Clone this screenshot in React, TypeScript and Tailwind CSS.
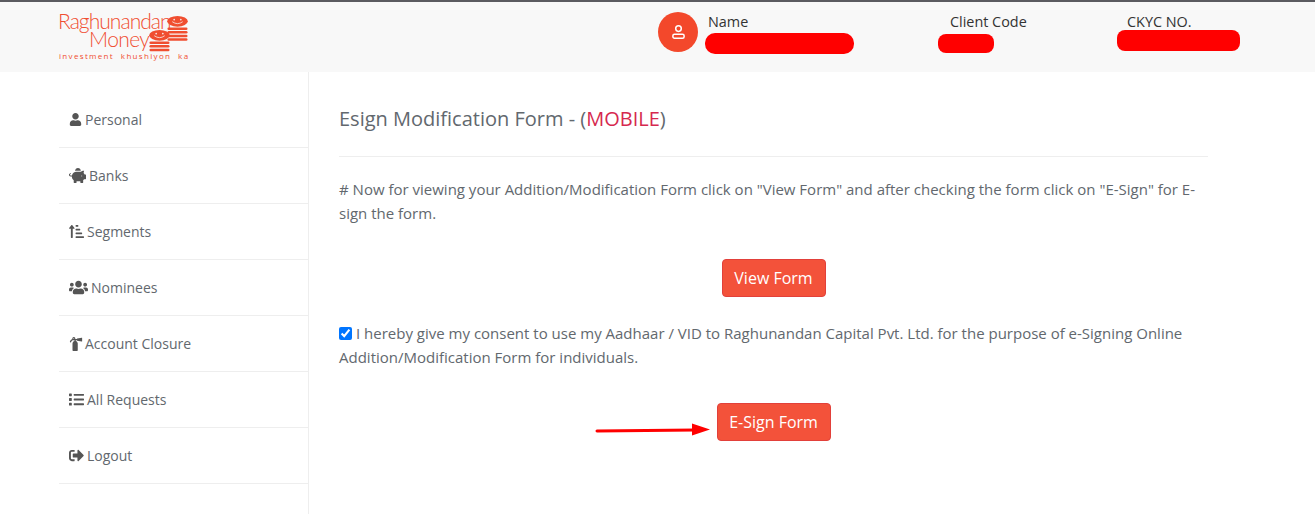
import React from "react";
import { FaUser, FaPiggyBank, FaSortAmountUpAlt, FaUsers, FaFireExtinguisher, FaList, FaSignOutAlt } from "react-icons/fa";

const items = [
  { label: "Personal", Icon: FaUser, size: 13, gap: "gap-[3px]" },
  { label: "Banks", Icon: FaPiggyBank, size: 17, gap: "gap-[3px]" },
  { label: "Segments", Icon: FaSortAmountUpAlt, size: 15, gap: "gap-[3px]" },
  { label: "Nominees", Icon: FaUsers, size: 19, gap: "gap-[3px]" },
  { label: "Account Closure", Icon: FaFireExtinguisher, size: 14, gap: "gap-[2px]" },
  { label: "All Requests", Icon: FaList, size: 15, gap: "gap-[3px]" },
  { label: "Logout", Icon: FaSignOutAlt, size: 15, gap: "gap-[3px]" },
];

function Coins({ n, className }: { n: number; className: string }) {
  const ys = Array.from({ length: n }, (_, i) => i);
  return (
    <svg viewBox={`0 0 22 ${12 + n * 3.8}`} className={className} fill="#f04e30">
      {ys.map((i) => (
        <rect key={i} x="0.5" y={12 + i * 3.8} width="21" height="2.6" rx="1.3" />
      ))}
      <ellipse cx="11" cy="5.6" rx="10.8" ry="5.6" />
      <circle cx="7.5" cy="3.8" r="0.8" fill="#f8f8f8" />
      <circle cx="14.5" cy="3.8" r="0.8" fill="#f8f8f8" />
      <path d="M5.5 6 Q11 10 16.5 6" stroke="#f8f8f8" strokeWidth="0.8" fill="none" />
    </svg>
  );
}

function Logo() {
  return (
    <div className="ml-[-1px] w-[131px] shrink-0 text-[#f04e30]">
      <div className="relative h-[36px] font-['Lato',sans-serif]">
        <div className="mt-[-1px] whitespace-nowrap text-[21px] font-light leading-[20px] tracking-[-0.95px]">Raghunandan</div>
        <div className="pl-[31px] text-[21px] font-light leading-[15px] tracking-[-0.6px]">Money</div>
        <Coins n={4} className="absolute left-[109px] top-[5px] w-[21px]" />
        <Coins n={3} className="absolute left-[91px] top-[19px] w-[21px]" />
      </div>
      <div className="ml-[1px] mt-[4px] whitespace-pre text-[8px] font-medium leading-[10px] tracking-[1.33px] font-['Open_Sans',sans-serif]">investment  khushiyon  ka</div>
    </div>
  );
}

function AvatarIcon() {
  return (
    <svg width="13" height="14" viewBox="0 0 13 14" fill="none" stroke="#fff" strokeWidth="1.5">
      <circle cx="6.5" cy="3.6" r="2.8" />
      <rect x="0.9" y="9.2" width="11.2" height="4" rx="1.5" />
    </svg>
  );
}

export default function App() {
  return (
    <div className="h-[514px] overflow-hidden bg-white font-['Open_Sans',sans-serif] text-[15px] text-[#62686e]">
      <header className="flex h-[72px] border-t-2 border-[#5b5b60] bg-[#f8f8f8] pl-[59px] pt-[10px] text-[14.4px]">
        <Logo />
        <div className="ml-[469px] flex h-[40px] w-[40px] items-center justify-center rounded-full bg-[#f3482b]">
          <AvatarIcon />
        </div>
        <div className="ml-[7px] w-[233px] text-[#333]">
          <div className="ml-[3px] leading-[20px]">Name</div>
          <div className="mt-[1px] h-[21px] w-[149px] rounded-[10px] bg-[#ff0000]" />
        </div>
        <div className="w-[179px] text-[#333]">
          <div className="ml-[12px] leading-[20px]">Client Code</div>
          <div className="mt-[2px] h-[19px] w-[56px] rounded-[8px] bg-[#ff0000]" />
        </div>
        <div className="text-[#333]">
          <div className="ml-[10px] leading-[20px]">CKYC NO.</div>
          <div className="mt-[-2px] h-[21px] w-[123px] rounded-[8px] bg-[#ff0000]" />
        </div>
      </header>
      <div className="flex">
        <aside className="ml-[59px] h-[442px] w-[250px] border-r border-[#eeeeee] pt-[20px] text-[14px]">
          {items.map(({ label, Icon, size, gap }) => (
            <div key={label} className={`flex h-[56px] items-center border-b border-[#eeeeee] pl-[10px] ${gap}`}>
              <span className="flex h-[14px] items-center text-[#555]">
                <Icon size={size} />
              </span>
              <span className="leading-[20px]">{label}</span>
            </div>
          ))}
        </aside>
        <main className="relative ml-[30px] w-[869px]">
          <h1 className="mt-[32px] text-[20px] leading-[30px]">
            Esign Modification Form - (<span className="text-[#d6294f]">MOBILE</span>)
          </h1>
          <hr className="mt-[22px] border-[#eeeeee]" />
          <p className="mt-[20px] leading-[24px]">
            # Now for viewing your Addition/Modification Form click on "View Form" and after checking the form click on "E-Sign" for E-sign the form.
          </p>
          <div className="mt-[34px] flex justify-center">
            <button className="h-[38px] w-[104px] rounded-[4px] border border-[#e2403a] bg-[#f3523a] text-[16px] text-white">View Form</button>
          </div>
          <p className="mt-[24px] leading-[24px]">
            <input type="checkbox" defaultChecked className="mr-[4px] h-[13px] w-[13px] align-[-1px] accent-[#0075ff]" />
            I hereby give my consent to use my Aadhaar / VID to Raghunandan Capital Pvt. Ltd. for the purpose of e-Signing Online Addition/Modification Form for individuals.
          </p>
          <div className="mt-[34px] flex justify-center">
            <button className="h-[38px] w-[114px] rounded-[4px] border border-[#e2403a] bg-[#f3523a] text-[16px] text-white">E-Sign Form</button>
          </div>
          <svg className="absolute left-[256px] top-[348px]" width="118" height="20" viewBox="0 0 118 20">
            <path d="M2 11 L100 10" stroke="#ff0000" strokeWidth="3" strokeLinecap="round" />
            <path d="M97 3.5 L115 9.5 L97 15.5 Z" fill="#ff0000" />
          </svg>
        </main>
      </div>
    </div>
  );
}
